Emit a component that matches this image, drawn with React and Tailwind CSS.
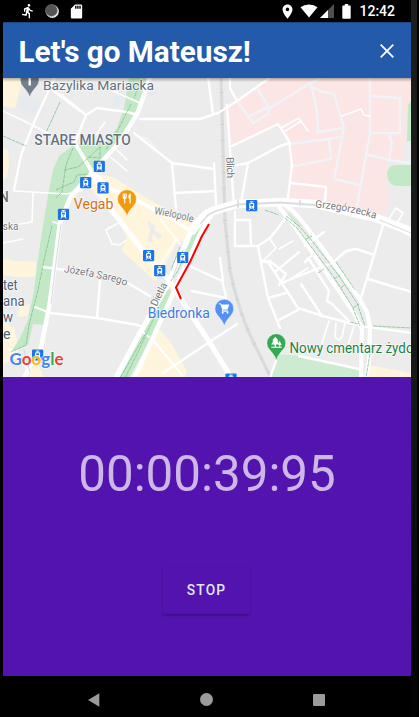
import React from "react";

const majorRoads = [
  ["M150 76L145 92L138 112L122 139L93 172L70 198L60 223L50 302L41 348L30 366L24 378", 4.6],
  ["M75 143L92 172L113 190L140 202L173 219L183 226L193 232", 3.8],
  ["M92 172L108 206L124 226L147 256L170 281L177 293L210 343L232 379", 5.2],
  ["M207 212L192 228L186 243L168 284L140 333L116 378", 5.5],
  ["M212 214L203 228L176 287L140 366L134 378", 4.5],
  ["M192 231L202 218L212 211L237 204L280 202L316 204L376 218L413 232", 8.6],
  ["M279 207L294 226L354 313L362 329L361 378", 4.2],
  ["M284 204L294 212L306 226L359 298L367 312L370 326L369 362L366 378", 4.2],
];

const whiteRoads = [
  "M14 190L21 155L36 118L50 88L55 77",
  "M50 88L80 111M60 94L86 115L97 108L127 112L138 115",
  "M86 115L75 143",
  "M140 119L200 119L218 113L237 101L268 79L272 76",
  "M208 77L213 114",
  "M230 78L230 88L237 101",
  "M227 105L231 165L234 206",
  "M134 133L172 163L214 169",
  "M172 163L176 209",
  "M214 163L216 204M174 193L215 191",
  "M232 146L278 124L289 141L292 165L287 206",
  "M233 166L248 163L280 146L290 143M248 163L241 203",
  "M291 183L326 187L325 201",
  "M43 267L65 270M126 282L150 296",
  "M100 281L97 318",
  "M35 307L50 313L97 318L138 325L146 329",
  "M190 266L222 281L226 296M192 291L226 298M220 258L223 281",
  "M163 373L208 343L237 324",
  "M235 212V246H251L250 220H235M251 246L258 246L270 238L286 218",
  "M258 246L263 273L268 298L280 328M276 361L270 378",
  "M261 260L268 262L298 308L323 316L361 326L412 333",
  "M268 298L286 293M279 320L298 310",
  "M144 329L182 375",
  "M324 232L305 246M299 252L275 272",
  "M262 262L270 261L286 274L279 285",
  "M281 283L332 263L346 251L356 249L372 254",
  "M384 222L361 298",
  "M368 279L412 292",
  "M301 284L322 316",
  "M305 262L309 259L329 291L327 301L332 304L351 323",
  "M384 222L413 237",
  "M299 356L359 369",
];

const thinRoads = [
  "M3 111L26 122L48 133M113 91L140 103M105 122L96 135",
  "M14 191L67 194L80 191L92 184",
  "M33 193L32 222L20 224",
  "M107 154L127 171M114 147L127 160",
  "M281 128L299 118L308 131M284 132L301 121",
  "M342 116L361 109L364 115L370 116",
  "M329 321L322 343M336 323L335 337L339 340L342 337L345 323M354 326L347 348",
  "M284 283L308 268M306 260L314 254M279 249L293 241M270 239L276 248L262 262",
  "M160 219L180 244M177 238L158 268M120 222L106 230L112 244L120 245L126 240",
  "M3 243L23 239M10 349L30 372",
  "M388 220L396 208L403 213L397 223",
  "M53 222L60 224",
];

const paleRoads = [
  "M237 101L253 123L268 114L268 106L257 88M248 117L268 107M268 109L280 102",
  "M270 108L309 84L321 78",
  "M311 86L320 91L334 94L344 128L334 179L359 185",
  "M311 84L317 111L318 132L344 128",
  "M370 78L370 133L357 206",
  "M370 96L400 98L400 133L371 133",
  "M366 154L389 160L411 163",
  "M389 134L392 143L389 159",
  "M291 144L342 137",
  "M329 139L331 159L294 166",
  "M140 137L148 139L155 147L154 150",
];

const tramStops = [
  [99.3, 166.3], [85.7, 182.7], [103, 187.8], [63.5, 214.3], [148.6, 255.6],
  [159.7, 270.7], [182.7, 257.5], [251.7, 205.7], [37.6, 355], [231, 379],
];

function TramStop({ x, y }) {
  return (
    <g transform={`translate(${x - 5.6} ${y - 5.6})`}>
      <rect width="11.2" height="11.2" rx="1.2" fill="#1a73e8" />
      <path d="M3.8 1.7H7.4M5.6 1.8V3" stroke="#fff" strokeWidth="0.9" />
      <rect x="3.1" y="2.9" width="5" height="5.6" rx="1" fill="#fff" />
      <rect x="4.2" y="4" width="2.8" height="1.8" fill="#1a73e8" />
      <circle cx="5.6" cy="7.1" r="0.6" fill="#1a73e8" />
      <path d="M3.9 8.4L2.9 10M7.3 8.4L8.3 10" stroke="#fff" strokeWidth="0.9" />
    </g>
  );
}

function Pin({ x, y, color, children }) {
  return (
    <g transform={`translate(${x} ${y})`}>
      <path
        d="M0 17.5C-1.2 13-4 10.5-6.6 7.2A9.4 9.4 0 1 1 6.6 7.2C4 10.5 1.2 13 0 17.5Z"
        fill={color}
        stroke="#fff"
        strokeWidth="0.4"
      />
      {children}
    </g>
  );
}

function Label({ x, y, w, size, color, weight = 400, children }) {
  return (
    <text
      x={x}
      y={y}
      textLength={w}
      lengthAdjust="spacingAndGlyphs"
      fontSize={size}
      fontWeight={weight}
      fill={color}
      stroke="#fff"
      strokeOpacity="0.8"
      strokeWidth="1.6"
      strokeLinejoin="round"
      paintOrder="stroke"
    >
      {children}
    </text>
  );
}

function StreetLabel({ href, w, size = 10.5, children }) {
  return (
    <text fontSize={size} fill="#75797e" stroke="#fff" strokeWidth="1.2" paintOrder="stroke">
      <textPath href={href} textLength={w} lengthAdjust="spacingAndGlyphs">{children}</textPath>
    </text>
  );
}

function RouteMap() {
  return (
    <svg viewBox="3 78 408 299" className="block h-[299px] w-[408px] shrink-0 overflow-hidden font-[Roboto,sans-serif]">
      <defs>
        <path id="sarego" d="M63.5 272.3Q84 275 99 278.500Q116 281 130 288" />
        <path id="wielopole" d="M154 214.3Q175 217 196 223.5" />
        <path id="grzeg" d="M315 207.5Q348 210 378 219.5" />
        <linearGradient id="barShade" x1="0" y1="0" x2="0" y2="1">
          <stop offset="0" stopColor="#000" stopOpacity="0.3" />
          <stop offset="1" stopColor="#000" stopOpacity="0" />
        </linearGradient>
      </defs>
      <rect x="3" y="78" width="408" height="299" fill="#ececec" />

      <g fill="#fef5dc">
        <path d="M3 78H24L19 92L15 108L3 106Z" />
        <path d="M3 148L8 150L9 162L7 177L3 180Z" />
        <path d="M90 180L98 174L113 177L150 200L190 221L197 226L187 242L178 241L165 265L155 281L121 250L127 238L118 221L90 188Z" />
        <path d="M3 259L15 261L36 262V277H16L3 275Z" />
        <path d="M19 306L30 304L27 316L18 317Z" />
        <path d="M3 322L14 328L18 344V358L3 364Z" />
        <path d="M30 370L38 364L44 378H28Z" />
        <path d="M144 360L158 328L170 341L187 371L185 378H136Z" />
        <path d="M368 365L411 373V378H366Z" />
      </g>
      <path d="M147 220L155 226V231L162 235L159 240L153 233L151 244L148 240L150 230Z" fill="#ececec" />
      <path d="M228 105L237 101L270 78H411V98L407 106L403 162L388 162L386 185L390 200L385 215L345 208L289 203L291 144L279 125L231 146Z" fill="#fbe6e5" />
      <path d="M19 98L30 97L38 100L46 107L40 117L24 112L18 106ZM115 94L124 90L121 108L111 108ZM152 86L160 90L156 98L148 96Z" fill="#e7eaee" />

      <g fill="#c3e8c6">
        <path d="M129 78H150L138 111L121 141L103 160L88 174L71 192L58 221L53 268L45 325L33 324L28 345L11 352L20 338L28 320L34 291L37 265L43 226L48 195L53 170L59 156L75 144L106 142L117 128L124 108Z" />
        <path d="M411 101L408 105L407 141H411ZM411 165H395Q387 166 387 175Q388 184 396 186H411Z" />
        <path d="M276 354L299 356L359 370V378H271Z" fill="#cdebd0" />
        <path d="M285 214L290 213L303 226H297Z" fill="#d3e9d6" />
      </g>

      <path d="M221 76L225 221L230 271Q238 308 250 335L271 378" fill="none" stroke="#d9dbde" strokeWidth="3.2" />
      <path d="M221 76L225 221L230 271Q238 308 250 335L271 378" fill="none" stroke="#ccd0d3" strokeWidth="3.6" strokeDasharray="1 15" />

      <g fill="none" strokeLinejoin="round" strokeLinecap="round">
        <g stroke="#f0f3f8" strokeWidth="2.4">{paleRoads.map((d) => <path key={d} d={d} />)}</g>
        <g stroke="#fff" strokeWidth="1.6">{thinRoads.map((d) => <path key={d} d={d} />)}</g>
        <g stroke="#fff" strokeWidth="2.4">{whiteRoads.map((d) => <path key={d} d={d} />)}</g>
        <g stroke="#c3e8c6">
          <path d="M187 250L193 235L202 224" strokeWidth="7" />
          <path d="M167 294L140 348L124 378" strokeWidth="9.500" />
        </g>
        <g stroke="#fff">{majorRoads.map(([d, w]) => <path key={d} d={d} strokeWidth={w} />)}</g>
        <path d="M141 331L149 337" stroke="#fff" strokeWidth="2" />
        <g stroke="#d9dde0" strokeWidth="1.1">
          <path d="M201 223L208 215L216 211L238 204.500L280 202.5L315 205M300 201V205M238 201V207" strokeWidth="1.8" />
          <path d="M61 224L56 262L51 304M183 250L173 277M24 350L30 372" />
          <path d="M380 220L411 233" />
        </g>
        <g stroke="#7cc290" strokeWidth="0.8" strokeDasharray="4 0.7" strokeLinecap="butt">
          <path d="M73 148L66 165L62 192L56 198M64 170L78 167L88 158L100 147M56 190L74 182L77 175L88 174M100 147V158L88 157" />
          <path d="M131 104L118 130L106 150M60 102L50 124L46 132M3 136L26 146M142 80L134 98" />
          <path d="M52 226L44 260L38 290L29 325L26 345L11 352" />
          <path d="M186 254L177 272L171 281M180 247L171 270M157 311L140 348L125 378M146 333L120 378" />
          <path d="M286 216L300 227L313 242L339 276L357 303L365 326M285 218L297 228L333 276L352 306L360 326" />
          <path d="M306 239L312 236M334 279L340 275M341 288L345 284M353 308L359 304" />
          <path d="M336 262L355 290M350 322L358 324M373 326L411 328M318 273L324 269M370 354L366 377M265 210L279 215" />
        </g>
      </g>

      <path d="M209 224L202 236L190 262L176 287.5L181 299" fill="none" stroke="#f00" strokeWidth="2" strokeLinejoin="round" />

      {tramStops.map(([x, y]) => <TramStop key={`${x}-${y}`} x={x} y={y} />)}

      <Pin x={29.7} y={79.5} color="#72808e">
        <path d="M-1.2 -5H1.2V6H-1.2Z" fill="#fff" />
      </Pin>
      <Pin x={127} y={198.6} color="#f29a0b">
        <path d="M-3.8 -5V-1.6Q-3.8 0-2.3 0T-.8 -1.6V-5M-2.3 -5V5" stroke="#fff" strokeWidth="1.1" fill="none" />
        <path d="M1.4 -1.5Q1.4-5 3.7-5V5H2.5V0H1.4Z" fill="#fff" />
      </Pin>
      <Pin x={224.3} y={308.2} color="#5491f5">
        <path d="M-5.4 -4.4H-3.6L-1.4 1.7H3.4M-1.4 1.6L-2.2 3H4" stroke="#fff" strokeWidth="1" fill="none" />
        <path d="M-3.2 -3.7H5L3.3 .9H-1.6Z" fill="#fff" />
        <circle cx="-1.6" cy="4.6" r="1" fill="#fff" /><circle cx="3.2" cy="4.6" r="1" fill="#fff" />
      </Pin>
      <Pin x={276.3} y={342.6} color="#34a853">
        <path d="M-1 -5.8L2 -2H1L3.200 2H-.3V4.2H-1.700V2H-5L-2.900 -2H-4Z" fill="#fff" />
        <path d="M3.200 -2L5.400 2.500H4V4.200H3V2.500H2ZM-5 4.100H5.400V5.100H-5Z" fill="#fff" />
      </Pin>

      <Label x={43} y={89.5} w={111} size={13.5} color="#5f7282">Bazylika Mariacka</Label>
      <Label x={34.3} y={145} w={96.5} size={14} weight={500} color="#66717f">STARE MIASTO</Label>
      <Label x={73.8} y={208.7} w={39.5} size={14.5} color="#d5701a">Vegab</Label>
      <Label x={-1} y={202} w={9.800} size={14} weight={500} color="#66717f">N</Label>
      <Label x={2.8} y={230.3} w={15.500} size={10.5} color="#75797e">ska</Label>
      <Label x={3} y={289.7} w={14.6} size={14} color="#4c6378">tet</Label>
      <Label x={3} y={306} w={21.6} size={14} color="#4c6378">ana</Label>
      <Label x={3} y={322} w={10} size={14} color="#4c6378">w</Label>
      <Label x={3} y={339} w={7.5} size={14} color="#4c6378">e</Label>
      <Label x={147.8} y={318.3} w={62} size={14.5} color="#3b7be4">Biedronka</Label>
      <Label x={289.5} y={352.8} w={124} size={14} color="#1c8043">Nowy cmentarz żydo</Label>
      <StreetLabel href="#sarego" w={64}>Józefa Sarego</StreetLabel>
      <StreetLabel href="#wielopole" w={39.5}>Wielopole</StreetLabel>
      <StreetLabel href="#grzeg" w={61.5}>Grzegórzecka</StreetLabel>
      <text transform="translate(226.3 157.3) rotate(88)" textLength="21" fontSize="10.5" fill="#75797e" stroke="#fff" strokeWidth="1.2" paintOrder="stroke">Blich</text>
      <text transform="translate(156.5 307) rotate(-64)" textLength="25" fontSize="10.5" fill="#75797e" stroke="#fff" strokeWidth="1.2" paintOrder="stroke">Dietla</text>

      <text x="9.6" y="365.4" textLength="54" lengthAdjust="spacingAndGlyphs" fontSize="17.500" fontWeight="700" stroke="#fff" strokeOpacity="0.8" strokeWidth="1.4" paintOrder="stroke" fontFamily="Lato, sans-serif">
        <tspan fill="#4285f4">G</tspan><tspan fill="#ea4335">o</tspan><tspan fill="#fbbc04">o</tspan><tspan fill="#4285f4">g</tspan><tspan fill="#34a853">l</tspan><tspan fill="#ea4335">e</tspan>
      </text>
      <rect x="3" y="78" width="408" height="4" fill="url(#barShade)" />
    </svg>
  );
}

function StatusBar() {
  return (
    <div className="flex h-[22px] shrink-0 items-center justify-between pl-[16.5px] pr-[16px] text-white">
      <div className="flex items-center gap-[9px]">
        <svg className="size-4" viewBox="0 0 24 24" fill="currentColor">
          <path d="M13.49 5.48c1.1 0 2-.9 2-2s-.9-2-2-2-2 .9-2 2 .9 2 2 2zm-3.6 13.9l1-4.4 2.1 2v6h2v-7.5l-2.1-2 .6-3c1.3 1.5 3.3 2.5 5.5 2.5v-2c-1.9 0-3.5-1-4.3-2.4l-1-1.6c-.4-.6-1-1-1.7-1-.3 0-.5.1-.8.1l-5.2 2.2v4.7h2v-3.4l1.8-.7-1.6 8.1-4.9-1-.4 2 7 1.4z" />
        </svg>
        <svg className="size-[14px]" viewBox="0 0 14 14">
          <circle cx="7.3" cy="7.3" r="6.6" fill="#e8e8e8" />
          <circle cx="6.4" cy="6.4" r="5.9" fill="#555" stroke="#7d7d7d" strokeWidth="0.9" strokeDasharray="1.2 0.9" />
        </svg>
        <svg className="size-[17px]" viewBox="0 0 24 24" fill="currentColor">
          <path d="M18 2h-8L4.02 8 4 20c0 1.1.9 2 2 2h12c1.1 0 2-.9 2-2V4c0-1.1-.9-2-2-2zm-6 6h-2V4h2v4zm3 0h-2V4h2v4zm3 0h-2V4h2v4z" />
        </svg>
      </div>
      <div className="flex items-center">
        <svg className="size-[17px]" viewBox="0 0 24 24" fill="currentColor">
          <path d="M12 2C8.13 2 5 5.13 5 9c0 5.25 7 13 7 13s7-7.75 7-13c0-3.87-3.13-7-7-7zm0 9.5a2.5 2.5 0 1 1 0-5 2.5 2.5 0 0 1 0 5z" />
        </svg>
        <svg className="ml-[4px] h-[14px] w-[18px]" viewBox="0 0 18 14" fill="currentColor">
          <path d="M9 13.6L.5 3.2Q4 .4 9 .4T17.5 3.2Z" />
        </svg>
        <svg className="ml-[2px] size-[14px]" viewBox="0 0 14 14">
          <path d="M14 0V14H0Z" fill="#505050" /><path d="M8 6V14H0Z" fill="#fff" />
        </svg>
        <svg className="ml-[8px] h-[15px] w-[9px]" viewBox="0 0 9 15" fill="currentColor">
          <path d="M2.8 0H6.2V1.5H8Q8.7 1.5 8.7 2.2V14Q8.7 14.7 8 14.7H1Q.3 14.7 .3 14V2.2Q.3 1.5 1 1.5H2.8Z" />
        </svg>
        <span className="ml-[8px] text-[14px] leading-none font-medium">12:42</span>
      </div>
    </div>
  );
}

export default function App() {
  return (
    <div className="flex h-[717px] w-[419px] overflow-hidden bg-black pl-[3px] font-[Roboto,sans-serif]">
      <div className="flex w-[408px] shrink-0 flex-col">
        <StatusBar />
        <header className="flex h-[56px] shrink-0 items-center justify-between border-t border-[#1b4584] bg-[#235aaa] pr-[16.5px] pl-[15.5px] text-white">
          <h1 className="pt-[3px] text-[29.7px] leading-none font-bold whitespace-nowrap">Let's go Mateusz!</h1>
          <svg className="size-4" viewBox="0 0 16 16" fill="none" stroke="currentColor" strokeWidth="1.8">
            <path d="M1.7 1.7L14.3 14.3M14.3 1.7L1.7 14.3" />
          </svg>
        </header>
        <RouteMap />
        <main className="flex h-[299px] shrink-0 flex-col items-center bg-[#5313af]">
          <div className="mt-[72px] text-[49.3px] leading-[50px] whitespace-nowrap text-[#ccb7e7]">00:00:39:95</div>
          <button className="mt-[68px] mr-[1px] h-[47px] w-[87px] rounded-[2px] bg-[#5313af] text-[13.8px] font-medium tracking-[1.2px] text-[#e0e8f6] shadow-[0_2px_2px_rgba(0,0,0,0.2),0_0_2px_rgba(0,0,0,0.1)]">
            STOP
          </button>
        </main>
        <nav className="flex h-[41px] shrink-0 items-center justify-between pt-[6px] pr-[86px] pl-[85px]">
          <svg className="h-[14px] w-[12px]" viewBox="0 0 12 14"><path d="M0 7L11.3 .3V13.7Z" fill="#9b9b9b" /></svg>
          <div className="size-[13px] rounded-full bg-[#9b9b9b]" />
          <div className="size-[12px] rounded-[1px] bg-[#9b9b9b]" />
        </nav>
      </div>
      <div className="w-[8px] shrink-0 border-r-2 border-black bg-linear-to-b from-[#1c1d1d] via-[#181919] to-[#040404]" />
    </div>
  );
}
